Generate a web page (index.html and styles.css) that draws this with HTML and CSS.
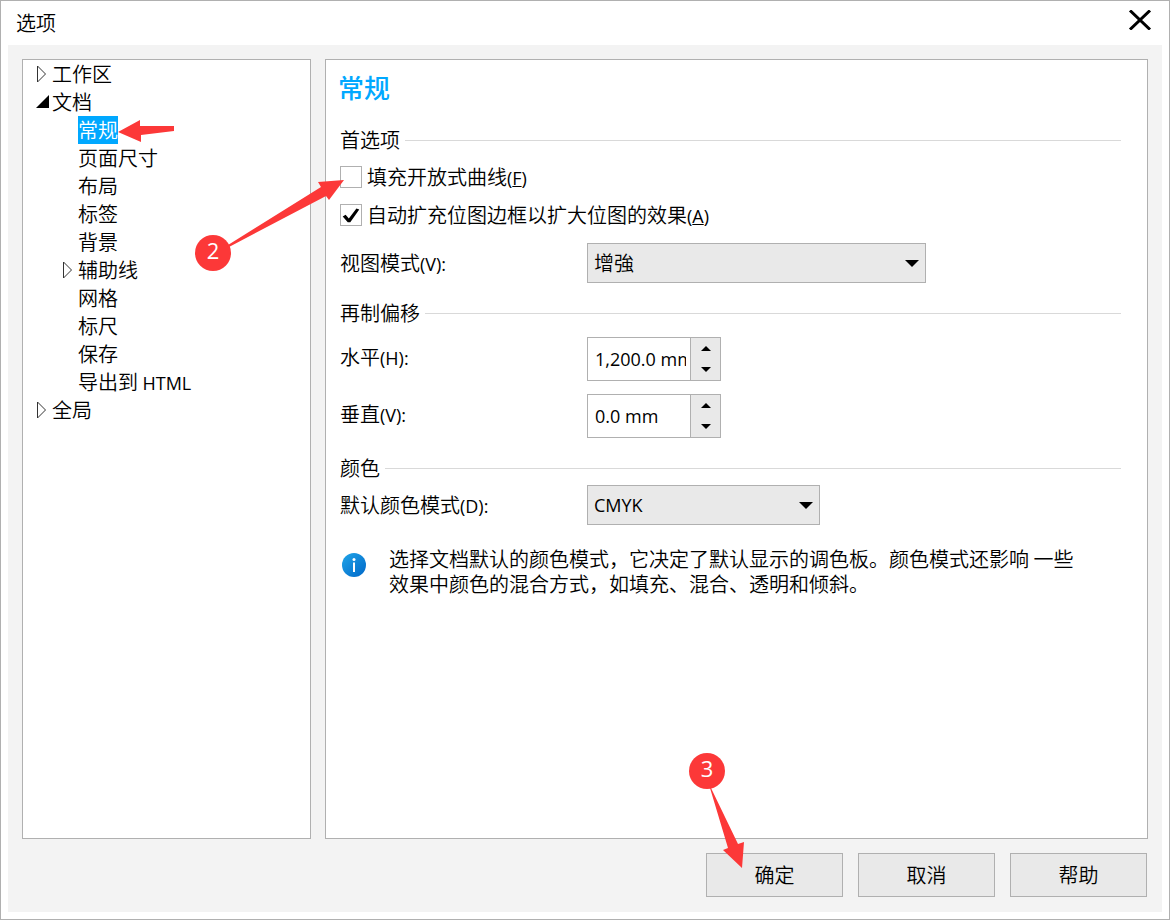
FILE: index.html
```html
<!DOCTYPE html>
<html lang="zh-CN">
<head>
  <meta charset="UTF-8">
  <meta name="viewport" content="width=device-width, initial-scale=1.0">
  <title>选项</title>
  <link rel="stylesheet" href="styles.css">
</head>
<body>
  <div class="window">
    <header class="titlebar">
      <h1>选项</h1>
      <button class="close-button" aria-label="关闭">
        <svg width="24" height="20" viewBox="0 0 24 20"><path d="M2 0.5L22 19.5M22 0.5L2 19.5" stroke="#000" stroke-width="3" fill="none"/></svg>
      </button>
    </header>

    <main class="content">
      <div class="columns">
        <!-- Árbol de categorías -->
        <nav class="tree">
          <ul>
            <li><div class="row"><span class="arrow"><svg width="12" height="18" viewBox="0 0 12 18"><path d="M1.5 1v16L9.5 9z" fill="#fff" stroke="#333"/></svg></span><span class="name">工作区</span></div></li>
            <li>
              <div class="row"><span class="arrow"><svg width="14" height="14" viewBox="0 0 14 14"><path d="M13 0v13H0z"/></svg></span><span class="name">文档</span></div>
              <ul>
                <li><div class="row"><span class="arrow"></span><span class="name selected">常规
                  <svg class="note note-arrow" width="56" height="22" viewBox="0 0 56 22"><path d="M0 12L22 0V6L56 6V11L23 15V22z"/></svg></span></div></li>
                <li><div class="row"><span class="arrow"></span><span class="name">页面尺寸</span></div></li>
                <li><div class="row"><span class="arrow"></span><span class="name">布局</span></div></li>
                <li><div class="row"><span class="arrow"></span><span class="name">标签</span></div></li>
                <li><div class="row"><span class="arrow"></span><span class="name">背景</span></div></li>
                <li><div class="row"><span class="arrow"><svg width="12" height="18" viewBox="0 0 12 18"><path d="M1.5 1v16L9.5 9z" fill="#fff" stroke="#333"/></svg></span><span class="name">辅助线</span></div></li>
                <li><div class="row"><span class="arrow"></span><span class="name">网格</span></div></li>
                <li><div class="row"><span class="arrow"></span><span class="name">标尺</span></div></li>
                <li><div class="row"><span class="arrow"></span><span class="name">保存</span></div></li>
                <li><div class="row"><span class="arrow"></span><span class="name">导出到 <span class="latin">HTML</span></span></div></li>
              </ul>
            </li>
            <li><div class="row"><span class="arrow"><svg width="12" height="18" viewBox="0 0 12 18"><path d="M1.5 1v16L9.5 9z" fill="#fff" stroke="#333"/></svg></span><span class="name">全局</span></div></li>
          </ul>
        </nav>

        <!-- Panel de opciones -->
        <section class="panel">
          <h2>常规</h2>

          <h3 class="legend">首选项</h3>
          <div class="checks">
            <div class="check">
              <input type="checkbox" id="fill-curves">
              <label for="fill-curves">填充开放式曲线<span class="latin">(<u>F</u>)</span></label>
              <svg class="note note-two" width="152" height="94" viewBox="0 0 152 94">
                <circle cx="18" cy="75" r="18"/>
                <path d="M33 67L126 9L123 4L149 2L134 22L131 18L34 69z"/>
                <text x="18" y="81" text-anchor="middle">2</text>
              </svg>
            </div>
            <div class="check">
              <input type="checkbox" id="expand-bitmap" checked>
              <label for="expand-bitmap">自动扩充位图边框以扩大位图的效果<span class="latin">(<u>A</u>)</span></label>
            </div>
          </div>
          <div class="field">
            <label for="view-mode">视图模式<span class="latin">(V):</span></label>
            <div class="select">
              <select id="view-mode">
                <option>增強</option>
              </select>
              <svg class="caret" width="14" height="8" viewBox="0 0 14 8"><path d="M0 0h14L7 7z"/></svg>
            </div>
          </div>

          <h3 class="legend">再制偏移</h3>
          <div class="field field-spin">
            <label for="offset-h">水平<span class="latin">(H):</span></label>
            <div class="spin">
              <input type="text" id="offset-h" value="1,200.0 mm">
              <div class="spin-buttons">
                <button aria-label="增加"><svg width="10" height="5" viewBox="0 0 10 5"><path d="M5 0l5 5H0z"/></svg></button>
                <button aria-label="减少"><svg width="10" height="5" viewBox="0 0 10 5"><path d="M0 0h10L5 5z"/></svg></button>
              </div>
            </div>
          </div>
          <div class="field field-spin">
            <label for="offset-v">垂直<span class="latin">(V):</span></label>
            <div class="spin">
              <input type="text" id="offset-v" value="0.0 mm">
              <div class="spin-buttons">
                <button aria-label="增加"><svg width="10" height="5" viewBox="0 0 10 5"><path d="M5 0l5 5H0z"/></svg></button>
                <button aria-label="减少"><svg width="10" height="5" viewBox="0 0 10 5"><path d="M0 0h10L5 5z"/></svg></button>
              </div>
            </div>
          </div>

          <h3 class="legend">颜色</h3>
          <div class="field field-color">
            <label for="color-mode">默认颜色模式<span class="latin">(D):</span></label>
            <div class="select select-small">
              <select id="color-mode" class="latin">
                <option>CMYK</option>
              </select>
              <svg class="caret" width="14" height="8" viewBox="0 0 14 8"><path d="M0 0h14L7 7z"/></svg>
            </div>
          </div>

          <div class="info">
            <svg width="24" height="24" viewBox="0 0 24 24">
              <defs>
                <linearGradient id="info-blue" x1="0" y1="0" x2="1" y2="1">
                  <stop offset="0" stop-color="#21a5e8"/>
                  <stop offset="1" stop-color="#0067c8"/>
                </linearGradient>
              </defs>
              <circle cx="12" cy="12" r="12" fill="url(#info-blue)"/>
              <circle cx="12" cy="6.5" r="1.5" fill="#fff"/>
              <path d="M11 9.5h2V19h-2z" fill="#fff"/>
            </svg>
            <p>选择文档默认的颜色模式，它决定了默认显示的调色板。颜色模式还影响 一些效果中颜色的混合方式，如填充、混合、透明和倾斜。</p>
          </div>
        </section>
      </div>

      <footer class="buttons">
        <div class="ok">
          <button>确定</button>
          <svg class="note note-three" width="56" height="116" viewBox="0 0 56 116">
            <circle cx="18" cy="18" r="18"/>
            <path d="M22 35L49 91L55 89L53 115L34 97L39 95L21 35z"/>
            <text x="18" y="24" text-anchor="middle">3</text>
          </svg>
        </div>
        <button>取消</button>
        <button>帮助</button>
      </footer>
    </main>
  </div>
</body>
</html>
```
FILE: styles.css
```css
* {
  box-sizing: border-box;
}
body {
  margin: 0;
  font-family: "Noto Sans CJK SC", sans-serif;
  font-size: 20px;
  font-weight: 350;
  line-height: 28px;
  color: #000;
}
h1, h2, h3, p, ul {
  margin: 0;
  padding: 0;
  font-size: 20px;
  font-weight: inherit;
}
ul {
  list-style: none;
}
svg {
  display: block;
}
button, input, select {
  font: inherit;
  color: inherit;
}
.latin {
  font-family: "Open Sans", "Noto Sans", sans-serif;
  font-size: 18px;
  font-weight: 400;
}
.window {
  display: flex;
  flex-direction: column;
  min-height: 100vh;
  padding: 0 7px 7px;
  border: 1px solid #b0b0b0;
  background-color: #fff;
}
.titlebar {
  display: flex;
  justify-content: space-between;
  height: 44px;
  padding: 8px 10px 0 8px;
}
.close-button {
  height: 22px;
  padding: 0;
  border: none;
  background: none;
}
.content {
  flex: 1;
  display: flex;
  flex-direction: column;
  padding: 14px 14px 15px;
  background-color: #f3f3f3;
}
.columns {
  flex: 1;
  display: flex;
  gap: 14px;
}

/* Árbol */
.tree {
  width: 289px;
  flex-shrink: 0;
  padding-left: 13px;
  border: 1px solid #b0b0b0;
  background-color: #fff;
}
.tree ul ul {
  padding-left: 26px;
}
.row {
  display: flex;
  height: 28px;
}
.arrow {
  display: flex;
  align-items: center;
  width: 16px;
}
.selected {
  position: relative;
  background-color: #00a8ff;
  color: #fff;
}

/* Panel */
.panel {
  flex: 1;
  padding: 11px 26px 14px 12px;
  border: 1px solid #b0b0b0;
  background-color: #fff;
}
.panel > * {
  margin-left: 2px;
}
.panel h2 {
  margin: 0 0 23px;
  font-size: 26px;
  line-height: 32px;
  font-weight: 500;
  color: #00a8ff;
}
.legend {
  display: flex;
  align-items: center;
  gap: 5px;
}
.legend::after {
  content: "";
  flex: 1;
  height: 1px;
  background-color: #d9d9d9;
}
.checks {
  padding: 4px 0 9px;
}
.check {
  position: relative;
  display: flex;
  align-items: center;
  gap: 5px;
  height: 38px;
}
.check input {
  appearance: none;
  display: grid;
  place-items: center;
  width: 22px;
  height: 22px;
  margin: 0;
  border: 1px solid #b0b0b0;
  background-color: #fff;
}
.check input:checked::before {
  content: "";
  width: 18px;
  height: 16px;
  background-color: #000;
  clip-path: polygon(4% 60%, 20% 48%, 38% 72%, 80% 10%, 96% 16%, 46% 96%, 32% 96%);
}
.field {
  display: flex;
  align-items: center;
}
.field > label {
  width: 247px;
}
.select {
  position: relative;
  width: 339px;
}
.select-small {
  width: 233px;
}
select {
  appearance: none;
  display: block;
  width: 100%;
  height: 40px;
  padding: 0 6px;
  border: 1px solid #b0b0b0;
  border-radius: 0;
  background-color: #e9e9e9;
}
.caret {
  position: absolute;
  top: 17px;
  right: 7px;
  pointer-events: none;
}
.field + .legend {
  margin-top: 16px;
}
.field-spin {
  margin-top: 10px;
}
.field-spin + .field-spin {
  margin-top: 13px;
}
.field-spin > label {
  padding-bottom: 4px;
}
.field-color {
  margin-top: 3px;
}
.spin {
  display: flex;
  width: 134px;
  height: 44px;
  border: 1px solid #b0b0b0;
}
.spin input {
  width: 102px;
  padding: 0 4px 0 7px;
  border: none;
  font-family: "Open Sans", "Noto Sans", sans-serif;
  font-size: 18px;
  font-weight: 400;
}
.spin-buttons {
  flex: 1;
  display: flex;
  flex-direction: column;
  border-left: 1px solid #b0b0b0;
}
.spin-buttons button {
  flex: 1;
  display: flex;
  align-items: center;
  justify-content: center;
  padding: 0;
  border: none;
  background-color: #e9e9e9;
}
.info {
  display: flex;
  align-items: flex-start;
  gap: 23px;
  margin-top: 21px;
  padding: 0 40px 0 2px;
}
.info svg {
  flex-shrink: 0;
  margin-top: 7px;
}
.info p {
  line-height: 25px;
}

/* Botones */
.buttons {
  display: flex;
  justify-content: flex-end;
  gap: 15px;
  padding: 14px 1px 0 0;
}
.buttons button {
  display: block;
  width: 137px;
  height: 44px;
  border: 1px solid #b0b0b0;
  background-color: #e9e9e9;
}
.ok {
  position: relative;
}

/* Notas rojas */
.note {
  position: absolute;
  fill: #fc3838;
  pointer-events: none;
}
.note text {
  fill: #fff;
  font-family: "Open Sans", "Noto Sans", sans-serif;
  font-size: 22px;
  font-weight: 400;
}
.note-arrow {
  top: 4px;
  left: 40px;
}
.note-two {
  top: 20px;
  left: -145px;
}
.note-three {
  top: -100px;
  left: -17px;
}
```
